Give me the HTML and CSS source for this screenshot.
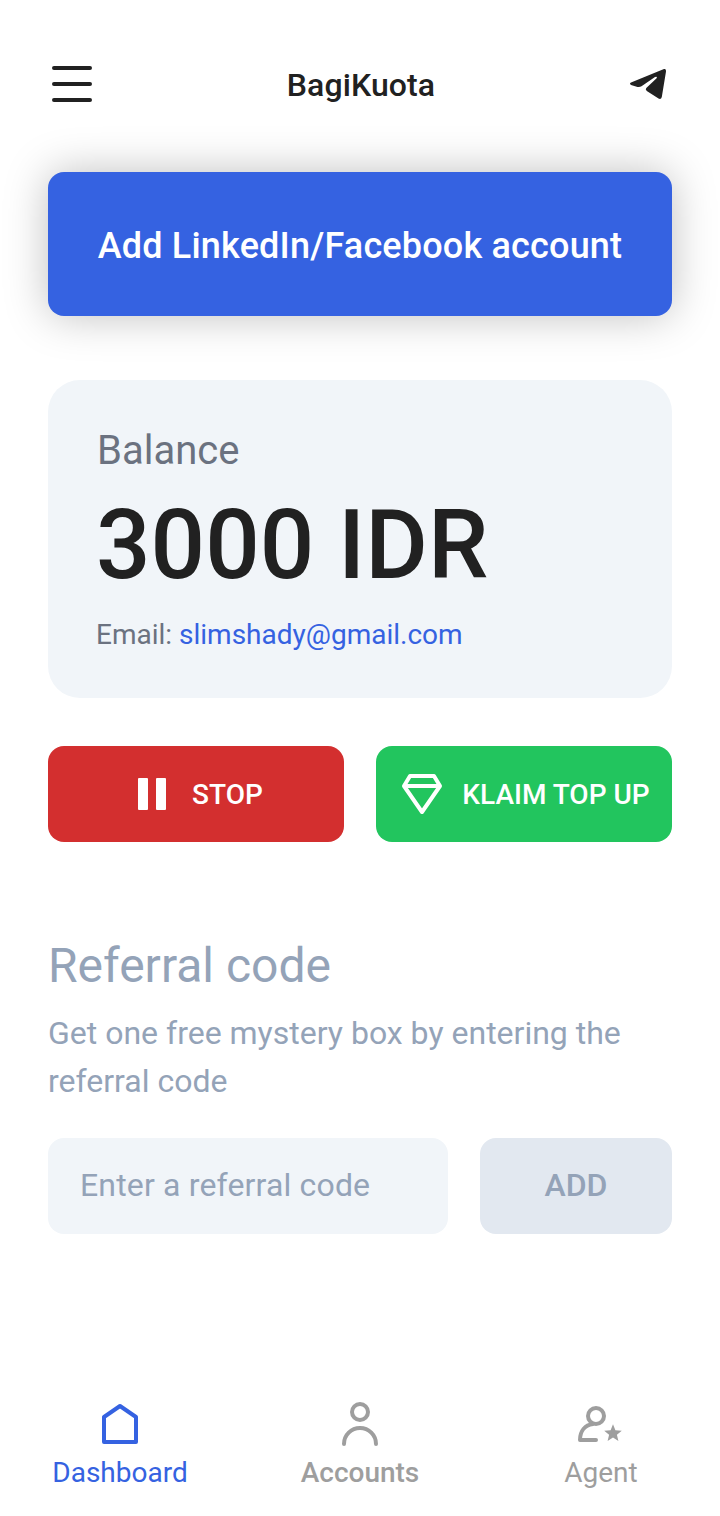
FILE: index.html
```html
<!DOCTYPE html>
<html lang="id">
<head>
<meta charset="utf-8">
<title>BagiKuota</title>
<link rel="stylesheet" href="styles.css">
</head>
<body>
<div class="app">
  <header class="topbar">
    <svg class="menu" width="48" height="48" viewBox="0 0 48 48"><path d="M6 8H42M6 24H42M6 40H42"/></svg>
    <h1 class="brand">BagiKuota</h1>
    <svg class="send" width="48" height="48" viewBox="0 0 48 48"><path d="M40 9.100 7 22.600Q5 23.700 7 25L13.500 26.900Q15.500 27.500 17.500 26.300L31 17Q33.800 15.900 32.600 18.300L22.300 28Q21 29.600 22.800 31L34.500 38.500Q37 39.800 37.800 37L42 11.500Q42.300 8.200 40 9.100Z"/></svg>
  </header>
  <main class="content">
    <button class="cta">Add LinkedIn/Facebook account</button>
    <section class="balance">
      <p class="balance-label">Balance</p>
      <p class="amount">3000 IDR</p>
      <p class="email">Email: <a class="email-link">slimshady@gmail.com</a></p>
    </section>
    <div class="actions">
      <button class="action stop"><svg width="48" height="48" viewBox="0 0 48 48"><rect x="10" y="8" width="10" height="32" rx="1"/><rect x="28" y="8" width="10" height="32" rx="1"/></svg><span>STOP</span></button>
      <button class="action claim"><svg width="48" height="48" viewBox="0 0 48 48"><path d="M12 6H36L42 16 24 42 6 16ZM6 16H42"/></svg><span>KLAIM TOP UP</span></button>
    </div>
    <section class="referral">
      <h2 class="referral-title">Referral code</h2>
      <p class="referral-text">Get one free mystery box by entering the referral code</p>
      <div class="referral-form">
        <input class="code" placeholder="Enter a referral code">
        <button class="add">ADD</button>
      </div>
    </section>
  </main>
  <nav class="tabs">
    <a class="tab active"><svg width="48" height="48" viewBox="0 0 48 48"><path d="M8 17 24 6 40 17V42H8Z"/></svg><span>Dashboard</span></a>
    <a class="tab strong"><svg width="48" height="48" viewBox="0 0 48 48"><circle cx="24" cy="12" r="8"/><path d="M8 44A16 16 0 0 1 40 44"/></svg><span>Accounts</span></a>
    <a class="tab agent"><svg width="48" height="48" viewBox="0 0 48 48"><circle cx="20" cy="16" r="8"/><path d="M20 40H4C4 31 9 25 17 24"/><path class="star" d="M37 24.300 39.400 30.300 45.800 30.700 40.900 34.800 42.400 41 37 37.600 31.600 41 33.100 34.800 28.200 30.700 34.600 30.300Z"/></svg><span>Agent</span></a>
  </nav>
</div>
</body>
</html>
```
FILE: styles.css
```css
* { box-sizing: border-box; }
body { margin: 0; background: #fff; font-family: Roboto, sans-serif; color: #212121; }
h1, h2, p { margin: 0; font-weight: 400; }
button, input { border: 0; font-family: inherit; padding: 0; }
svg { display: block; flex: none; }
.app { width: 720px; height: 1516px; display: flex; flex-direction: column; }
.topbar { height: 172px; padding: 60px 48px 64px; display: flex; justify-content: space-between; align-items: center; }
.menu path { fill: none; stroke: #212121; stroke-width: 4; stroke-linecap: round; }
.send { fill: #212121; }
.brand { font-size: 32px; font-weight: 500; line-height: 48px; letter-spacing: .1px; padding: 2px 0 0 2px; }
.content { padding: 0 48px; flex: 1; }
.cta { display: block; width: 624px; height: 144px; border-radius: 16px; background: #3562e1; color: #fff; font-size: 36px; font-weight: 500; letter-spacing: .18px; padding-top: 4px; box-shadow: 0 0 44px rgba(0,0,0,.25); }
.balance { margin-top: 64px; height: 318px; border-radius: 32px; background: #f1f5f9; padding: 43px 48px; }
.balance-label { font-size: 40px; line-height: 56px; color: #6b7280; padding-left: 1px; }
.amount { font-size: 96px; line-height: 112px; font-weight: 500; margin-top: 10px; }
.email { font-size: 28px; line-height: 40px; margin-top: 14px; color: #6b7280; }
.email-link { color: #3562e1; }
.actions { display: flex; gap: 32px; margin-top: 48px; }
.action { width: 296px; height: 96px; border-radius: 16px; color: #fff; font-size: 28px; font-weight: 500; display: flex; align-items: center; justify-content: center; gap: 16px; }
.stop { background: #d32f2f; padding-right: 1px; }
.stop svg { fill: #fff; }
.claim { background: #22c55e; }
.claim path { fill: none; stroke: #fff; stroke-width: 4; stroke-linejoin: round; }
.referral { margin-top: 92px; color: #94a3b8; }
.referral-title { font-size: 48px; line-height: 64px; }
.referral-text { font-size: 32px; line-height: 48px; margin-top: 11px; }
.referral-form { display: flex; gap: 32px; margin-top: 33px; }
.code { width: 400px; height: 96px; border-radius: 16px; background: #f1f5f9; padding: 0 32px 2px; font-size: 32px; letter-spacing: .16px; }
.code::placeholder { color: #94a3b8; }
.add { flex: 1; height: 96px; border-radius: 16px; background: #e2e8f0; color: #94a3b8; font-size: 32px; font-weight: 500; padding-bottom: 2px; }
.tabs { height: 116px; display: flex; justify-content: space-between; }
.tab { width: 240px; display: flex; flex-direction: column; align-items: center; font-size: 28px; line-height: 50px; color: #9e9e9e; }
.tab svg { fill: none; stroke: currentColor; stroke-width: 4; stroke-linecap: round; stroke-linejoin: round; }
.tab .star { fill: currentColor; stroke: none; }
.agent span { padding-left: 2px; }
.tab.active { color: #3562e1; }
.strong { font-weight: 500; }
```
